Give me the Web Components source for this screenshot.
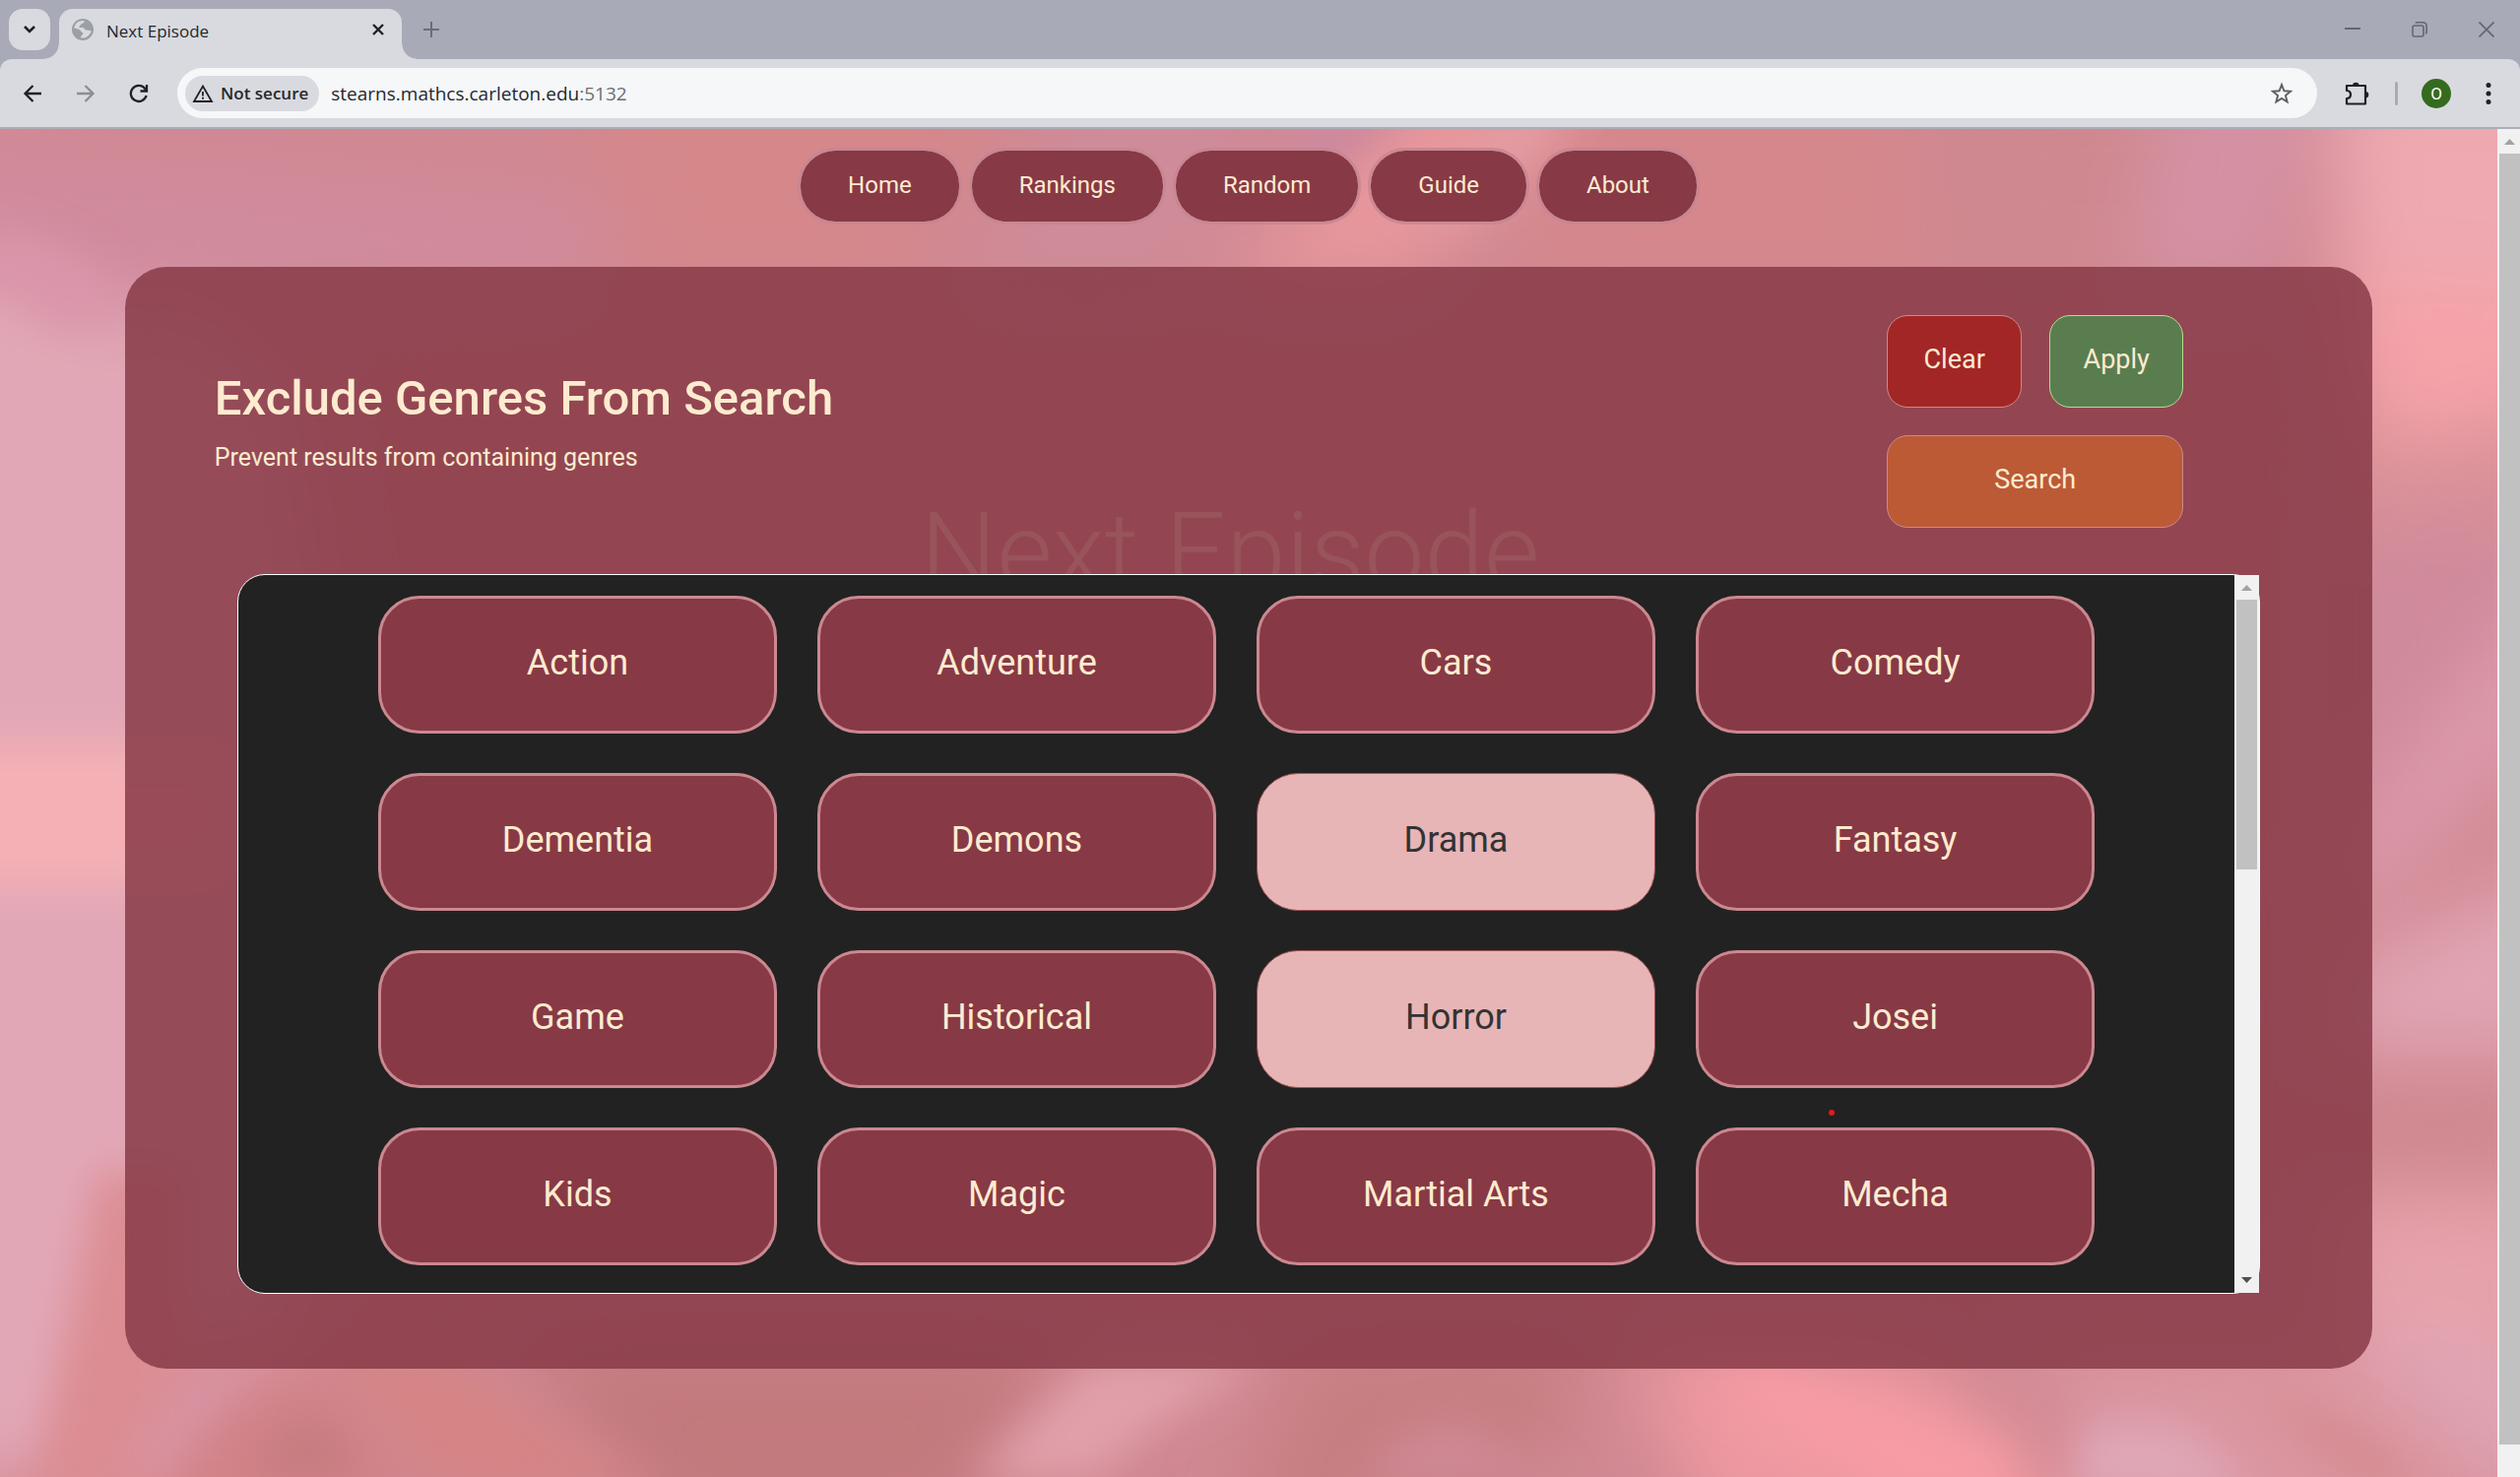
<!DOCTYPE html>
<html lang="en">
<head>
<meta charset="utf-8">
<title>Next Episode</title>
<style>
  html, body { margin: 0; height: 100%; }
  body { font-family: Roboto, "Noto Sans", sans-serif; overflow: hidden; }
</style>
</head>
<body>
<browser-window>
  <tab-strip slot="chrome">Next Episode</tab-strip>
  <tool-bar slot="chrome" host-name="stearns.mathcs.carleton.edu" port=":5132">Not secure</tool-bar>
  <marble-backdrop></marble-backdrop>
  <site-nav>
    <nav-pill>Home</nav-pill>
    <nav-pill>Rankings</nav-pill>
    <nav-pill>Random</nav-pill>
    <nav-pill>Guide</nav-pill>
    <nav-pill>About</nav-pill>
  </site-nav>
  <filter-panel>
    <span slot="watermark">Next Episode</span>
    <span slot="title">Exclude Genres From Search</span>
    <span slot="subtitle">Prevent results from containing genres</span>
    <action-button slot="actions" kind="clear">Clear</action-button>
    <action-button slot="actions" kind="apply">Apply</action-button>
    <action-button slot="actions" kind="search">Search</action-button>
    <genre-list>
      <genre-button>Action</genre-button>
      <genre-button>Adventure</genre-button>
      <genre-button>Cars</genre-button>
      <genre-button>Comedy</genre-button>
      <genre-button>Dementia</genre-button>
      <genre-button>Demons</genre-button>
      <genre-button selected>Drama</genre-button>
      <genre-button>Fantasy</genre-button>
      <genre-button>Game</genre-button>
      <genre-button>Historical</genre-button>
      <genre-button selected>Horror</genre-button>
      <genre-button>Josei</genre-button>
      <genre-button>Kids</genre-button>
      <genre-button>Magic</genre-button>
      <genre-button>Martial Arts</genre-button>
      <genre-button>Mecha</genre-button>
    </genre-list>
  </filter-panel>
</browser-window>

<script>
const define = (name, html, setup) => {
  customElements.define(name, class extends HTMLElement {
    connectedCallback() {
      if (this.shadowRoot) return;
      const t = document.createElement('template');
      t.innerHTML = html;
      this.attachShadow({ mode: 'open' }).append(t.content.cloneNode(true));
      if (setup) setup(this, this.shadowRoot);
    }
  });
};

define('browser-window', `
<style>
  :host { display: flex; flex-direction: column; height: 100vh; background: #a8aab7; }
  .view { flex: 1; min-height: 0; display: flex; border-top: 2px solid #abaeb4; }
  .page { flex: 1; min-width: 0; display: grid; grid-template: minmax(0, 1fr) / minmax(0, 1fr); overflow: hidden; position: relative; isolation: isolate; }
  main { grid-area: 1 / 1; display: flex; flex-direction: column; align-items: stretch; }
  ::slotted(marble-backdrop) { position: absolute; inset: 0; z-index: -1; }
</style>
<slot name="chrome"></slot>
<div class="view">
  <div class="page"><main><slot></slot></main></div>
  <scroll-track style="--w:23px; --thumb:1311; --after:33;"></scroll-track>
</div>`);

define('scroll-track', `
<style>
  :host { display: flex; flex-direction: column; width: var(--w, 25px); box-sizing: border-box; padding: 0 0 0 2px; background: #f1f1f1; }
  svg { display: block; width: 21px; height: 25px; }
  .thumb { flex: var(--thumb) 0 0px; background: #c1c1c1; }
  .rest { flex: var(--after) 0 0px; }
</style>
<svg viewBox="0 0 21 25"><path d="M5 16h11l-5.500-6z" fill="#a3a3a3"/></svg>
<div class="thumb"></div><div class="rest"></div>`);

define('tab-strip', `
<style>
  :host { display: flex; height: 60px; align-items: flex-start; box-sizing: border-box; padding: 9px 0 0 9px; font-family: "Open Sans", "Noto Sans", sans-serif; }
  button { border: 0; padding: 0; background: none; height: 42px; display: grid; place-items: center; font: inherit; }
  svg { display: block; fill: none; }
  .search { width: 42px; border-radius: 14px; background: #d9dadf; margin-right: 9px; }
  .tab { position: relative; width: 348px; height: 51px; box-sizing: border-box; padding: 0 12px 9px 12px; display: flex; align-items: center; background: #d9dadf; border-radius: 14px 14px 0 0; }
  .tab::before, .tab::after { content: ""; position: absolute; bottom: 0; width: 15px; height: 15px; }
  .tab::before { left: -15px; background: radial-gradient(circle at 0 0, transparent 14px, #d9dadf 15px); }
  .tab::after { right: -15px; background: radial-gradient(circle at 100% 0, transparent 14px, #d9dadf 15px); }
  .name { flex: 1; margin-left: 12px; font-size: 17px; line-height: 24px; padding-top: 3px; color: #26282c; }
  .close { width: 24px; }
  .new { width: 42px; margin-left: 9px; }
  .controls { margin-left: auto; display: flex; }
  .controls button { width: 68px; }
</style>
<button class="search" aria-label="Search tabs"><svg width="16" height="12" viewBox="0 0 16 12"><path d="M3 3l5 5 5-5" stroke="#1f2126" stroke-width="2.600"/></svg></button>
<div class="tab">
  <svg width="24" height="24" viewBox="0 0 24 24"><circle cx="12" cy="12" r="11" fill="#9aa0a6"/><path d="M3.300 10.500C4 6 7.500 3 12 3l1.500.3c.2 1.600-.8 2.400-2.600 2.700-1.200.4-.6 1.700-1.900 2.300-1 .5-1 1.600.2 1.800 2.300.1 4.300-.3 4.700 1.300.3 1.200 1.300 1.100 2.600 1.200 1.600.2 2.300 1.200 4.200.4-.6 3.300-3.200 6.300-6.700 7.400-1.300.2-2.800.3-4 0 .2-1.800.5-2.600 1.800-3.100 1.200-.7.700-2-.3-2.300-1.500-.5-1.400-2.500-3.400-3.200-1.600-.5-3-1.300-4.800-1.300z" fill="#d9dadf"/></svg>
  <span class="name"><slot></slot></span>
  <button class="close" aria-label="Close tab"><svg width="14" height="14" viewBox="0 0 14 14"><path d="M2 2l10 10M12 2L2 12" stroke="#1f2126" stroke-width="2.400"/></svg></button>
</div>
<button class="new" aria-label="New tab"><svg width="16" height="16" viewBox="0 0 16 16"><path d="M8 0v16M0 8h16" stroke="#6b6d76" stroke-width="2"/></svg></button>
<div class="controls">
  <button aria-label="Minimize"><svg width="16" height="16" viewBox="0 0 16 16"><path d="M0 7h16" stroke="#65676f" stroke-width="2"/></svg></button>
  <button aria-label="Restore"><svg width="16" height="16" viewBox="0 0 16 16" stroke="#65676f" stroke-width="1.600"><rect x="1" y="4" width="11" height="11" rx="2"/><path d="M4 1.500q.5-.7 1.500-.7H11Q15.200.8 15.200 5v5.500q0 1-1 1.800"/></svg></button>
  <button aria-label="Close"><svg width="16" height="16" viewBox="0 0 16 16"><path d="M.5.500l15 15M15.500.500l-15 15" stroke="#65676f" stroke-width="1.700"/></svg></button>
</div>`);

define('tool-bar', `
<style>
  :host { display: flex; align-items: center; height: 69px; box-sizing: border-box; padding: 0 16px 0 6px; background: #d9dadf; border-radius: 12px 12px 0 0; font-family: "Open Sans", "Noto Sans", sans-serif; }
  button { border: 0; padding: 0; background: none; height: 42px; display: grid; place-items: center; font: inherit; color: inherit; }
  svg { display: block; fill: none; }
  .nav { width: 54px; }
  .omni { flex: 1; height: 51px; margin-left: 12px; padding: 0 13px 0 8px; display: flex; align-items: center; border-radius: 26px; background: #f5f7f9; }
  .chip { height: 36px; border-radius: 18px; background: #d9dadf; display: flex; align-items: center; gap: 7px; padding: 0 11px 0 7px; font-size: 17px; font-weight: 600; color: #26282c; }
  input { field-sizing: content; border: 0; background: none; outline: 0; padding: 0; margin-left: 12px; font: inherit; font-size: 19px; line-height: 28px; color: #26282c; }
  .port { flex: 1; font-size: 19px; line-height: 28px; color: #6b6e73; }
  .star { width: 46px; }
  .ext { width: 48px; margin-left: 16px; }
  .line { width: 3px; height: 24px; border-radius: 2px; background: #a8aab7; margin-left: 15px; }
  .avatar { width: 30px; height: 30px; border-radius: 50%; background: #346b1e; color: #fff; font: 17px Roboto, sans-serif; margin-left: 24px; }
  .menu { width: 32px; margin-left: 22px; }
</style>
<button class="nav" aria-label="Back"><svg width="20" height="20" viewBox="0 0 20 20"><path d="M19 10H2.500M10.500 2L2.500 10l8 8" stroke="#1f2126" stroke-width="2.300"/></svg></button>
<button class="nav" aria-label="Forward"><svg width="20" height="20" viewBox="0 0 20 20"><path d="M1 10h16.500M9.500 2l8 8-8 8" stroke="#8c8e94" stroke-width="2.300"/></svg></button>
<button class="nav" aria-label="Reload"><svg width="20" height="20" viewBox="0 0 20 20"><path d="M17.600 12A8 8 0 1 1 16 4.800l1.500 2M18 1v6.500h-6.500" stroke="#1f2126" stroke-width="2.300"/></svg></button>
<div class="omni">
  <button class="chip"><svg width="22" height="20" viewBox="0 0 22 20"><path d="M11 2.500L20 18H2z" stroke="#1f2126" stroke-width="1.800"/><path d="M11 8v4.500M11 13.800v2" stroke="#1f2126" stroke-width="1.800"/></svg><span><slot></slot></span></button>
  <input aria-label="Address" size="25"><span class="port"></span>
  <button class="star" aria-label="Bookmark"><svg width="24" height="24" viewBox="0 0 24 24"><path d="M12 3l2.400 6.300 6.600.4-5.100 4.300 1.700 6.500L12 16.900l-5.600 3.600 1.700-6.500L3 9.700l6.600-.4z" stroke="#5b5e64" stroke-width="1.900"/></svg></button>
</div>
<button class="ext" aria-label="Extensions"><svg width="26" height="26" viewBox="0 0 26 26"><path d="M3 5h19v18.500H3v-5.500q4-.3 4-4t-4-4z" stroke="#1f2126" stroke-width="2.200" stroke-linejoin="round"/><path d="M9 5a3.300 3.300 0 0 1 6.600 0zM22 11a3.300 3.300 0 0 1 0 6.600z" fill="#1f2126"/></svg></button>
<span class="line"></span>
<button class="avatar" aria-label="Profile">O</button>
<button class="menu" aria-label="Menu"><svg width="6" height="24" viewBox="0 0 6 24"><path d="M3 1a2.500 2.500 0 1 1 0 5a2.500 2.500 0 1 1 0-5zM3 9.500a2.500 2.500 0 1 1 0 5a2.500 2.500 0 1 1 0-5zM3 18a2.500 2.500 0 1 1 0 5a2.500 2.500 0 1 1 0-5z" fill="#1f2126"/></svg></button>`,
(el, root) => {
  root.querySelector('input').value = el.getAttribute('host-name');
  root.querySelector('.port').textContent = el.getAttribute('port');
});

define('marble-backdrop', `
<style>
  :host { display: block; }
  svg { display: block; width: 100%; height: 100%; }
</style>
<svg viewBox="0 0 2536 1369" preserveAspectRatio="none" aria-hidden="true">
  <defs>
    <filter id="s" x="-50%" y="-50%" width="200%" height="200%"><feGaussianBlur stdDeviation="20"/></filter>
    <filter id="m" x="-50%" y="-50%" width="200%" height="200%"><feGaussianBlur stdDeviation="38"/></filter>
  </defs>
  <rect width="2536" height="1369" fill="#d08892"/>
  <g filter="url(#m)">
    <path d="M-100 150L130 130 300 260 380 800 260 1369H-100z" fill="#e2a7b6"/>
    <path d="M-100 20L140 30 700 90 560 160 100 190-100 100z" fill="#d08b9d"/>
    <path d="M580-60H1060L900 160H640z" fill="#d5878a"/>
    <path d="M1080-60h240l-120 220H980z" fill="#cf8b99"/>
    <path d="M1440-60h190l-200 220h-190z" fill="#e8979c"/>
    <path d="M1600-60h320l40 220h-420z" fill="#d5878b"/>
    <path d="M2000-60h240l40 220h-300z" fill="#cf888f"/>
    <path d="M2200-60h160l-60 220h-140z" fill="#d592a4"/>
    <path d="M2370-60h300v280h-290z" fill="#eea9b1"/>
    <path d="M2370 140l230 20v140l-200 20z" fill="#f5a3a9"/>
    <path d="M2370 300l240 40v90l-240 10z" fill="#da9298"/>
    <path d="M2370 400h230v170l-230 260z" fill="#cf8a9b"/>
    <path d="M2370 730l230-300v180l-230 210z" fill="#dc9aaa"/>
    <path d="M2370 860l230-120v200h-230z" fill="#e1a5b3"/>
    <path d="M2360 990l240 0v90l-240-10z" fill="#cf888f"/>
    <path d="M2370 1080h230v180l-230 30z" fill="#e6a2aa"/>
    <path d="M2380 1200l220 60v130l-120-60z" fill="#dfa5b5"/>
    <path d="M150 1240h180l120 190H60z" fill="#d28287"/>
    <path d="M520 1230h560l-120 200H680z" fill="#c3797d"/>
    <path d="M1330 1230h300l-120 200h-260z" fill="#c77e81"/>
    <path d="M1650 1240h290l200 190h-400z" fill="#ef9aa1"/>
    <path d="M2040 1230h340l240 200h-400z" fill="#da96a0"/>
  </g>
  <g filter="url(#s)">
    <rect x="-60" y="624" width="300" height="146" fill="#f4b0b5"/>
    <path d="M100 1060h80v340H30z" fill="#dc8d93"/>
    <path d="M200 1250l70 0-90 110-60 10z" fill="#d893a2"/>
    <path d="M-20 105q110 10 140 70l-60 30q-30-50-80-50z" fill="#db95ab"/>
    <path d="M1540-20l60 0-110 110-60-10z" fill="#e39da3"/>
    <path d="M1350-20h80l-90 70-60-10z" fill="#cb88a0"/>
    <path d="M1110 1250h170l-110 70-60 50h-120z" fill="#e0a0aa"/>
    <path d="M250 1369l40-50 40-10 40 60z" fill="#c47b7f"/>
    <path d="M340 1250l110 0 210 130H450z" fill="#d68484"/>
    <path d="M1420 1330l60-20 110 70h-210z" fill="#cf8995"/>
    <path d="M1720 1260l90 0 220 80 20 60h-110z" fill="#f79ba4"/>
    <path d="M2120 1310l100 10 70 70h-190z" fill="#e0a7b7"/>
    <path d="M2280 1280l100 30 90 70h-70z" fill="#d68a90"/>
  </g>
</svg>`);

define('site-nav', `
<style>
  :host { display: block; }
  nav { display: flex; justify-content: center; gap: 7px; padding: 19px 0 43px; }
</style>
<nav><slot></slot></nav>`);

define('nav-pill', `
<style>
  :host { display: block; }
  a { display: block; border: 3px solid rgba(197, 134, 146, .8); background: #873946; background-clip: padding-box; border-radius: 38px; padding: 0 48px 2px; font-size: 24px; line-height: 70px; color: #fdebcf; text-decoration: none; }
</style>
<a href="#"><slot></slot></a>`);

define('filter-panel', `
<style>
  :host { display: block; position: relative; isolation: isolate; width: 90%; margin: 0 auto; box-sizing: border-box; padding: 49px 0 76px; border-radius: 42px; background: rgba(135, 57, 70, .84); color: #fdebcf; }
  header { display: flex; justify-content: space-between; align-items: center; padding: 0 192px 47px 91px; }
  .text { padding-top: 4px; }
  h1 { margin: 0; font-size: 49px; line-height: 60px; font-weight: 500; }
  p { margin: 0; font-size: 25px; line-height: 40px; padding-top: 10px; }
  .actions { display: grid; grid-template-columns: 137px 136px; gap: 28px; }
  .mark { position: absolute; z-index: -1; left: 35.400%; top: 228px; font-size: 109px; line-height: 124px; font-weight: 300; color: #99545b; white-space: nowrap; }
</style>
<div class="mark"><slot name="watermark"></slot></div>
<header>
  <div class="text"><h1><slot name="title"></slot></h1><p><slot name="subtitle"></slot></p></div>
  <div class="actions"><slot name="actions"></slot></div>
</header>
<slot></slot>`);

define('action-button', `
<style>
  :host { display: block; }
  :host([kind="search"]) { grid-column: 1 / -1; }
  button { display: block; width: 100%; height: 94px; box-sizing: border-box; padding: 0 0 4px; border: 1px solid #cc8a8a; border-radius: 21px; font: inherit; font-size: 27px; color: #fdebcf; background: #a32626; }
  :host([kind="apply"]) button { background: #5a7d50; border-color: #b5dd8c; }
  :host([kind="search"]) button { background: #bc5a36; }
</style>
<button type="button"><slot></slot></button>`);

define('genre-list', `
<style>
  :host { display: flex; position: relative; width: 90%; margin: 0 auto; box-sizing: border-box; border: 1px solid #fff; border-radius: 28px; background: #222; }
  .grid { flex: 1; display: grid; grid-template-columns: repeat(4, minmax(0, 1fr)); gap: 40px 41px; padding: 21px 142px 28px; }
  .bar { width: 25px; display: flex; flex-direction: column; background: #f1f1f1; box-sizing: border-box; padding: 0 2px; }
  .bar svg { display: block; width: 21px; height: 25px; }
  .thumb { flex: 274 0 0px; background: #c1c1c1; }
  .rest { flex: 404 0 0px; }
  .pointer { position: absolute; left: 78.700%; top: 74.500%; width: 6px; height: 6px; border-radius: 50%; background: #e31b1b; }
</style>
<div class="grid"><slot></slot></div>
<div class="bar">
  <svg viewBox="0 0 21 25"><path d="M5 16h11l-5.500-6z" fill="#a3a3a3"/></svg>
  <div class="thumb"></div><div class="rest"></div>
  <svg viewBox="0 0 21 25"><path d="M5 9h11l-5.500 6z" fill="#505050"/></svg>
</div>
<span class="pointer"></span>`);

define('genre-button', `
<style>
  :host { display: block; }
  button { display: block; width: 100%; height: 140px; box-sizing: border-box; padding: 0 0 4px; border: 3px solid #cb8890; border-radius: 42px; background: #873946; color: #fdebcf; font: inherit; font-size: 36px; }
  :host([selected]) button { border: 1px solid #9a5454; background: #e8b5b7; color: #333; }
</style>
<button type="button"><slot></slot></button>`,
(el, root) => root.querySelector('button').setAttribute('aria-pressed', el.hasAttribute('selected')));
</script>
</body>
</html>
